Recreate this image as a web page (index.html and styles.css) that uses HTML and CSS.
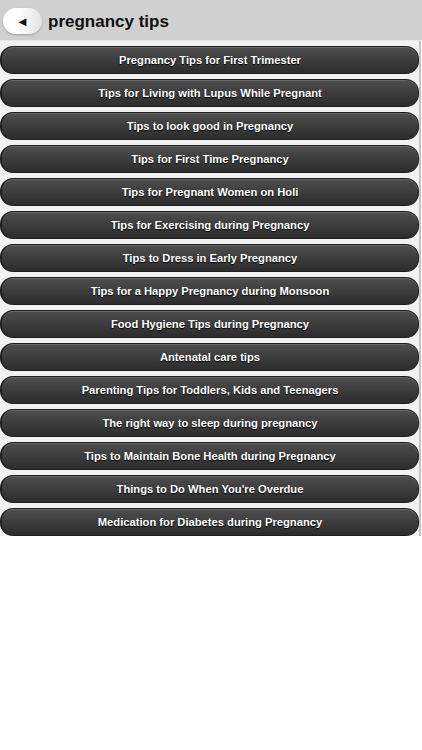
FILE: index.html
```html
<!DOCTYPE html>
<html lang="en">
<head>
  <meta charset="UTF-8">
  <meta name="viewport" content="width=device-width, initial-scale=1.0">
  <title>pregnancy tips</title>
  <link rel="stylesheet" href="styles.css">
</head>
<body>
  <!-- Header bar -->
  <div class="header">
    <button class="back-btn"><span class="arrow">&#9668;</span></button>
    <h1>pregnancy tips</h1>
  </div>

  <!-- Tips list -->
  <div class="tips-list">
    <a class="tip" href="#">Pregnancy Tips for First Trimester</a>
    <a class="tip" href="#">Tips for Living with Lupus While Pregnant</a>
    <a class="tip" href="#">Tips to look good in Pregnancy</a>
    <a class="tip" href="#">Tips for First Time Pregnancy</a>
    <a class="tip" href="#">Tips for Pregnant Women on Holi</a>
    <a class="tip" href="#">Tips for Exercising during Pregnancy</a>
    <a class="tip" href="#">Tips to Dress in Early Pregnancy</a>
    <a class="tip" href="#">Tips for a Happy Pregnancy during Monsoon</a>
    <a class="tip" href="#">Food Hygiene Tips during Pregnancy</a>
    <a class="tip" href="#">Antenatal care tips</a>
    <a class="tip" href="#">Parenting Tips for Toddlers, Kids and Teenagers</a>
    <a class="tip" href="#">The right way to sleep during pregnancy</a>
    <a class="tip" href="#">Tips to Maintain Bone Health during Pregnancy</a>
    <a class="tip" href="#">Things to Do When You're Overdue</a>
    <a class="tip" href="#">Medication for Diabetes during Pregnancy</a>
  </div>
</body>
</html>
```

FILE: styles.css
```css
body {
  margin: 0;
  padding: 0;
  background: #ffffff;
  font-family: 'Liberation Sans', Arial, sans-serif;
}
.header {
  height: 40px;
  background: #d0d0d0;
  border-bottom: 1px solid #e8e8e8;
  display: flex;
  align-items: center;
  padding-left: 3px;
}
.back-btn {
  width: 39px;
  height: 26px;
  margin-top: 2px;
  border: none;
  border-radius: 13px;
  background: linear-gradient(90deg, #ffffff 40%, #e2e2e2);
  box-shadow: 0 1px 2px rgba(0, 0, 0, 0.25);
  padding: 0;
  display: flex;
  align-items: center;
  justify-content: center;
  cursor: pointer;
}
.arrow {
  font-size: 13px;
  color: #111;
  line-height: 1;
}
h1 {
  margin: 3px 0 0 6px;
  font-size: 17px;
  font-weight: bold;
  color: #111;
}
.tips-list {
  width: 419px;
  background: #f1f1f1;
  border-right: 2px solid #c4c4c4;
  padding: 5px 0 0;
  display: flex;
  flex-direction: column;
  gap: 5px;
}
.tip {
  height: 26px;
  display: flex;
  align-items: center;
  justify-content: center;
  background: linear-gradient(#4e4e4e, #2c2c2c);
  border: 1px solid #1e1e1e;
  border-left-width: 2px;
  border-radius: 13px;
  box-shadow: inset 0 1px 0 rgba(255, 255, 255, 0.15);
  color: #ffffff;
  font-size: 11.2px;
  font-weight: bold;
  text-decoration: none;
  text-shadow: 0 1px 1px #000;
}
```
